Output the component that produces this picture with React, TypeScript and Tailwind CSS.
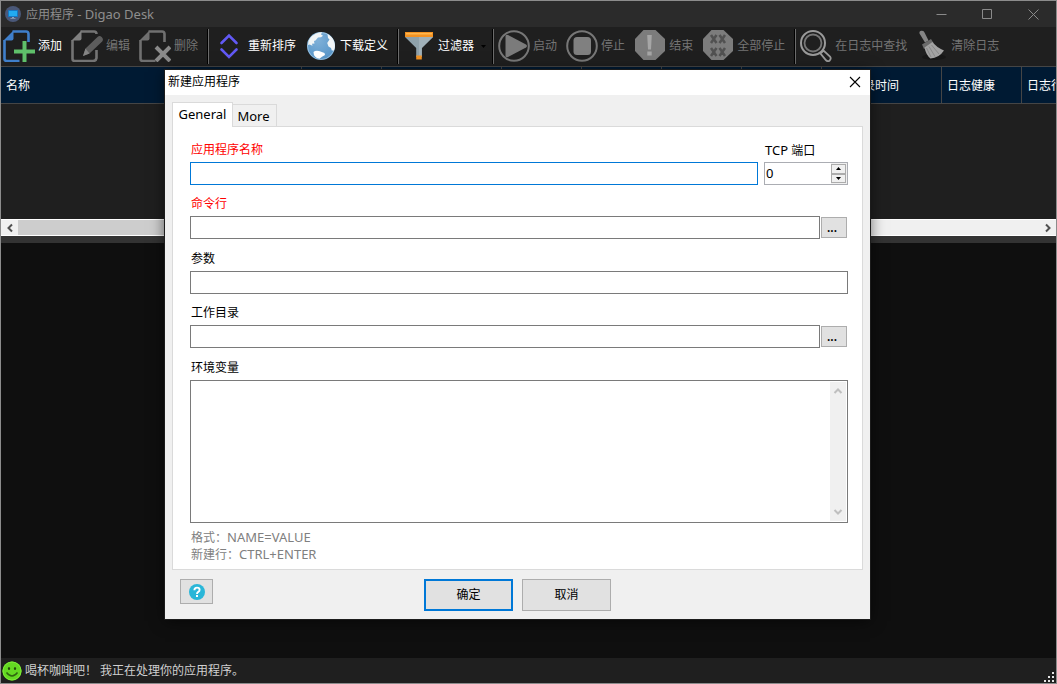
import React from "react";

type IconProps = { className?: string };

function AppLogo({ className = "size-4" }: IconProps) {
  return (
    <svg viewBox="0 0 16 16" className={className} aria-hidden="true">
      <circle cx="8" cy="8" r="8" fill="#4a5878" />
      <rect x="3" y="4" width="10" height="7" rx="0.6" fill="#1577c4" />
      <rect x="4" y="5" width="8" height="5" fill="#22aaf0" />
      <path d="M7 11h2v1h1.500v0.700h-5V12H7z" fill="#8fa3bd" />
    </svg>
  );
}

function PageShape({ color, fold }: { color: string; fold: string }) {
  return (
    <>
      <path d="M9.500 1.500H23q2.500 0 2.500 2.500v8M1.500 10v19q0 2 2.500 2h12.500" fill="none" stroke={color} strokeWidth="2.600" />
      <path d="M0.500 10.500 10.500 0.600V8.500q0 2-2 2z" fill={fold} />
    </>
  );
}

function AddIcon() {
  return (
    <svg viewBox="0 0 32 32" className="size-8" aria-hidden="true">
      <PageShape color="#3f7fcb" fold="#3f7fcb" />
      <path d="M21.500 11v21M11 21.500h21" stroke="#5fc06a" strokeWidth="4" />
    </svg>
  );
}

function EditIcon() {
  return (
    <svg viewBox="0 0 32 32" className="size-8" aria-hidden="true">
      <path d="M9.500 1.500H23q2.500 0 2.500 2.500M1.500 10v19q0 2 2.500 2h18q3 0 3.500-3v-8" fill="none" stroke="#747474" strokeWidth="2.600" />
      <path d="M0.500 10.500 10.500 0.600V8.500q0 2-2 2z" fill="#808080" />
      <path d="m12 26 2.500-7.500L26.500 7q2-2 4.200 0t0.500 4.500L18.500 23.500z" fill="#5d5d5d" />
      <path d="m12 26 2.500-7.500 4 5z" fill="#858585" />
    </svg>
  );
}

function DeleteIcon() {
  return (
    <svg viewBox="0 0 32 32" className="size-8" aria-hidden="true">
      <PageShape color="#707070" fold="#707070" />
      <path d="m17 17 14 14M31 17 17 31" stroke="#8a8a8a" strokeWidth="4" />
    </svg>
  );
}

function SortIcon() {
  return (
    <svg viewBox="0 0 32 32" className="size-8" aria-hidden="true">
      <path d="m8.500 13 7.500-7.500 7.500 7.500M8.500 19.500l7.500 7.500 7.500-7.500" fill="none" stroke="#6259f5" strokeWidth="2.600" strokeLinecap="round" />
    </svg>
  );
}

function GlobeIcon() {
  return (
    <svg viewBox="0 0 32 32" className="size-8" aria-hidden="true">
      <defs>
        <radialGradient id="ocean" cx="0.4" cy="0.3" r="0.75">
          <stop offset="0" stopColor="#7fb0d8" />
          <stop offset="1" stopColor="#5594c8" />
        </radialGradient>
      </defs>
      <circle cx="16" cy="16" r="14" fill="url(#ocean)" />
      <path d="M7 6q5-4 10-3.800l-1 2.200 2 1.300-2 1.500-3 0.300-2.500 3-1.500 0.500 0.500 2.500-2.500 0.200 0.500 2-3-1.200-1.500 0.500Q3 9.500 7 6z" fill="#f2f5f6" />
      <path d="M8.500 22q2-2 5.500-1l5.500 2 0.500 2-3 1.800-2.500 2q-6-1-6-6.800z" fill="#fff" />
      <path d="M22.500 4q5 2.500 6.700 7.500t-0.200 9l-2.200 0-0.800-2.500-2.500-1.500-1.300-3.500 2.300-3.500-1.500-1.500z" fill="#f2f5f6" />
      <circle cx="16" cy="16" r="13.500" fill="none" stroke="#e0edf5" strokeWidth="0.700" opacity="0.6" />
    </svg>
  );
}

function FunnelIcon() {
  return (
    <svg viewBox="0 0 32 32" className="size-8" aria-hidden="true">
      <path d="M2 7h28L18.800 18v9h-5.600v-9z" fill="#8fa1aa" />
      <path d="M16 7h14L18.800 18v9H16z" fill="#a0b0b8" />
      <path d="M2 2h28v5H2z" fill="#f39222" />
      <path d="M3 3h26v1.500H3z" fill="#ffb64d" />
      <path d="M13.200 25.500h5.600v4h-5.600z" fill="#f39222" />
    </svg>
  );
}

function PlayIcon() {
  return (
    <svg viewBox="0 0 32 32" className="size-8" aria-hidden="true">
      <circle cx="16" cy="16" r="14.800" fill="none" stroke="#777" strokeWidth="2" />
      <path d="M7.500 6.500q0-2.500 2.500-1.500l18 9.500q2 1.500 0 3L10 27q-2.500 1-2.500-1.500z" fill="#7b7b7b" />
    </svg>
  );
}

function StopIcon() {
  return (
    <svg viewBox="0 0 32 32" className="size-8" aria-hidden="true">
      <circle cx="16" cy="16" r="14.800" fill="none" stroke="#777" strokeWidth="2" />
      <rect x="7.500" y="7" width="17.500" height="18" rx="3.500" fill="#808080" />
    </svg>
  );
}

function KillIcon() {
  return (
    <svg viewBox="0 0 32 32" className="size-8" aria-hidden="true">
      <path d="M9.500 0h12L31 9v12l-9.500 9h-12L1 21V9z" fill="#7c7c7c" />
      <path d="M13.200 5h4.600l-0.800 14.500h-3zM13.300 21.500h4.400v4h-4.400z" fill="#a6a6a6" />
    </svg>
  );
}

function KillAllIcon() {
  return (
    <svg viewBox="0 0 32 32" className="size-8" aria-hidden="true">
      <path d="M9.500 0h12L31 9v12l-9.500 9h-12L1 21V9z" fill="#7c7c7c" />
      <path d="m9 5 5.500 8m0-8L9 13M17.500 5l5.500 8m0-8-5.500 8M9 18l5.500 8m0-8L9 26M17.500 18l5.500 8m0-8-5.500 8" stroke="#515151" strokeWidth="2.500" />
    </svg>
  );
}

function SearchIcon() {
  return (
    <svg viewBox="0 0 32 32" className="size-8" aria-hidden="true">
      <path d="m20.500 23.500 3-3 6.500 6q1.500 2-0.200 3.800t-3.800 0z" fill="#1f1f1f" stroke="#9a9a9a" strokeWidth="1.800" />
      <circle cx="13" cy="13" r="12" fill="#1f1f1f" stroke="#9a9a9a" strokeWidth="2" />
      <circle cx="13" cy="13" r="8.500" fill="none" stroke="#777" strokeWidth="1.800" />
    </svg>
  );
}

function BroomIcon() {
  return (
    <svg viewBox="0 0 32 32" className="size-8" aria-hidden="true">
      <ellipse cx="18" cy="27" rx="12" ry="3" fill="#171717" />
      <path d="M3.500 3.500q-0.500-2.500 2-2.800t3 1.800l4 8-3.500 2z" fill="#858585" />
      <path d="m6 14.500 9-5.500 2.500 4-9.500 6z" fill="#6b6b6b" />
      <path d="m8.500 17.500 8-5.500q3.500 5 11.500 8.500-5 7.500-13.500 8-4.500-3.500-6-11z" fill="#a2a2a2" />
      <path d="m10.500 18 4.500 9m-2-10.500 6 10m-3.500-11.500 7.500 9" stroke="#808080" strokeWidth="0.800" />
    </svg>
  );
}

function ToolButton({ icon, label, disabled = false }: { icon: React.ReactNode; label: string; disabled?: boolean }) {
  return (
    <button
      type="button"
      disabled={disabled}
      className="flex shrink-0 items-center gap-[3px] pr-[7px] pl-0.5 text-white disabled:text-[#747474]"
    >
      {icon}
      <span className="whitespace-nowrap">{label}</span>
    </button>
  );
}

function ToolSeparator() {
  return (
    <div className="flex h-[35px] w-1.5 shrink-0 justify-center">
      <div className="w-0.5 border-r border-[#6c6c6c] bg-black" />
    </div>
  );
}

function Chevron({ d, className }: { d: string; className: string }) {
  return (
    <svg viewBox="0 0 10 10" className={className} fill="none" stroke="currentColor" strokeWidth="2" aria-hidden="true">
      <path d={d} />
    </svg>
  );
}

function Latin({ children }: { children: React.ReactNode }) {
  return <span className="text-[13px]">{children}</span>;
}

const columns = [
  { label: "名称", width: "w-[301px]" },
  { label: "", width: "w-20" },
  { label: "", width: "w-[120px]" },
  { label: "", width: "w-20" },
  { label: "", width: "w-20" },
  { label: "", width: "w-20" },
  { label: "", width: "w-20" },
  { label: "最后记录时间", width: "w-[120px]" },
  { label: "日志健康", width: "w-20" },
  { label: "日志行数", width: "w-20" },
];

const fieldClass = "h-[23px] w-full min-w-0 border border-[#7a7a7a] bg-white px-0.5 outline-none";

function Field({
  id,
  label,
  required = false,
  children,
  className = "",
}: {
  id: string;
  label: React.ReactNode;
  required?: boolean;
  children: React.ReactNode;
  className?: string;
}) {
  return (
    <div className={`flex flex-col gap-[3px] ${className}`}>
      <label htmlFor={id} className={required ? "h-[18px] pl-px leading-[18px] text-[#ff0000]" : "h-[18px] pl-px leading-[18px]"}>
        {label}
      </label>
      {children}
    </div>
  );
}

function PathField({ id, label, required }: { id: string; label: string; required?: boolean }) {
  return (
    <Field id={id} label={label} required={required}>
      <div className="flex items-center gap-px pr-px">
        <input id={id} className={fieldClass} />
        <button
          type="button"
          aria-label={`浏览${label}`}
          className="h-[21px] w-[26px] shrink-0 border border-[#adadad] bg-[#e1e1e1] pr-1 leading-5 font-semibold text-black"
        >
          ...
        </button>
      </div>
    </Field>
  );
}

function NewAppDialog() {
  return (
    <section
      role="dialog"
      aria-labelledby="dialog-title"
      className="absolute top-[69px] right-[186px] left-[164px] bg-[#f0f0f0] text-black shadow-[0_2px_14px_rgba(0,0,0,0.6)] outline outline-[#1c1c1c]"
    >
      <header className="flex h-[25px] items-center justify-between bg-white pr-2 pb-px pl-[3px]">
        <h2 id="dialog-title">新建应用程序</h2>
        <button type="button" aria-label="关闭" className="p-px">
          <svg viewBox="0 0 12 12" className="size-3" stroke="#000" strokeWidth="1.1" aria-hidden="true">
            <path d="m1 1 10 10M11 1 1 11" />
          </svg>
        </button>
      </header>

      <div className="px-[7px] pt-[7px]">
        <div role="tablist" className="flex items-end text-[13px]">
          <button
            type="button"
            role="tab"
            aria-selected="true"
            className="relative z-10 -mb-px h-[25px] w-[61px] border border-b-0 border-[#dadada] bg-white pb-0.5"
          >
            General
          </button>
          <button
            type="button"
            role="tab"
            aria-selected="false"
            className="h-[22px] w-11 border border-b-0 border-l-0 border-[#dadada] bg-[#f0f0f0] pr-0.5"
          >
            More
          </button>
        </div>

        <div role="tabpanel" className="flex flex-col gap-[11px] border border-[#dadada] bg-white pt-3.5 pr-3.5 pb-1.5 pl-[17px]">
          <div className="flex flex-col gap-2.5">
            <div className="flex gap-1.5">
              <Field id="app-name" label="应用程序名称" required className="min-w-0 flex-1">
                <input id="app-name" className="h-[23px] w-full border border-[#0078d7] bg-white px-0.5 outline-none" />
              </Field>
              <Field id="tcp-port" label={<><Latin>TCP</Latin> 端口</>} className="w-21">
                <div className="flex h-[23px] border border-[#abadb3] bg-white">
                  <input id="tcp-port" inputMode="numeric" defaultValue="0" className="h-5 min-w-0 flex-1 px-px text-[13px] outline-none" />
                  <div className="flex w-4 shrink-0 flex-col bg-[#f0f0f0] py-px pr-px">
                    <button type="button" aria-label="增加" className="flex flex-1 items-center justify-center border border-[#acacac]">
                      <svg viewBox="0 0 5 3" className="h-[3px] w-[5px]" aria-hidden="true">
                        <path d="M0 3 2.500 0 5 3z" />
                      </svg>
                    </button>
                    <button type="button" aria-label="减少" className="flex flex-1 items-center justify-center border border-[#acacac]">
                      <svg viewBox="0 0 5 3" className="h-[3px] w-[5px]" aria-hidden="true">
                        <path d="M0 0h5L2.500 3z" />
                      </svg>
                    </button>
                  </div>
                </div>
              </Field>
            </div>
            <PathField id="command" label="命令行" required />
          </div>

          <div className="flex flex-col gap-2.5">
            <Field id="arguments" label="参数">
              <input id="arguments" className={fieldClass} />
            </Field>
            <PathField id="workdir" label="工作目录" />
          </div>

          <div>
            <Field id="environment" label="环境变量">
              <div className="flex h-[143px] border border-[#7a7a7a] bg-white">
                <textarea id="environment" className="min-w-0 flex-1 resize-none p-0.5 outline-none" />
                <div className="m-px flex w-4 shrink-0 flex-col items-center justify-between bg-[#f0f0f0] py-1 text-[#bfbfbf]">
                  <Chevron d="m1.500 7 3.500-3.500L8.500 7" className="size-2.5" />
                  <Chevron d="m1.500 3 3.500 3.500L8.500 3" className="size-2.5" />
                </div>
              </div>
            </Field>
            <div className="pt-1.5 pl-px leading-[17px] text-[#808080]">
              <p className="h-[17px]">格式：<Latin>NAME=VALUE</Latin></p>
              <p className="h-[17px]">新建行：<Latin>CTRL+ENTER</Latin></p>
            </div>
          </div>
        </div>
      </div>

      <footer className="grid grid-cols-[1fr_auto_1fr] items-start px-[15px] pt-[9px] pb-2">
        <button
          type="button"
          aria-label="帮助"
          className="flex h-[25px] w-[33px] items-center justify-center border border-[#adadad] bg-[#e1e1e1]"
        >
          <svg viewBox="0 0 16 16" className="size-4" aria-hidden="true">
            <circle cx="8" cy="8" r="8" fill="#29b6d8" />
            <path d="M5.400 6.200q0-2.600 2.600-2.600t2.600 2.200q0 1.300-1.300 2.100T8 10" fill="none" stroke="#fff" strokeWidth="1.900" />
            <path d="M7 11h2v2H7z" fill="#fff" />
          </svg>
        </button>
        <div className="flex gap-[9px]">
          <button type="button" className="h-8 w-[89px] border-2 border-[#0078d7] bg-[#e1e1e1]">
            确定
          </button>
          <button type="button" className="h-8 w-[89px] border border-[#adadad] bg-[#e1e1e1]">
            取消
          </button>
        </div>
      </footer>
    </section>
  );
}

export default function App() {
  return (
    <div className="relative flex min-h-screen flex-col overflow-hidden border border-[#8c8c8c] bg-[#0f0f0f] font-['Noto_Sans','Noto_Sans_CJK_SC',sans-serif] text-[12px] leading-4 text-white">
      <header className="flex h-[26px] shrink-0 items-center gap-[5px] bg-[#2b2b2b] pl-1 text-[#8e8e8e]">
        <AppLogo />
        <h1 className="flex-1">应用程序 <Latin>- Digao Desk</Latin></h1>
        <div className="flex pr-[17px] text-[#8a8a8a]">
          {[
            { name: "最小化", d: "M0.500 5.500h10" },
            { name: "最大化", d: "M0.500 0.500h9v9h-9z" },
            { name: "关闭", d: "m0.500 0.500 10 10m0-10-10 10" },
          ].map((control) => (
            <button key={control.name} type="button" aria-label={control.name} className="ml-[35px]">
              <svg viewBox="0 0 11 11" className="size-[11px]" fill="none" stroke="currentColor" aria-hidden="true">
                <path d={control.d} />
              </svg>
            </button>
          ))}
        </div>
      </header>

      <nav aria-label="工具栏" className="flex h-[39px] shrink-0 items-center bg-[#1f1f1f] pb-px">
        <ToolButton icon={<AddIcon />} label="添加" />
        <ToolButton icon={<EditIcon />} label="编辑" disabled />
        <ToolButton icon={<DeleteIcon />} label="删除" disabled />
        <ToolSeparator />
        <ToolButton icon={<SortIcon />} label="重新排序" />
        <ToolButton icon={<GlobeIcon />} label="下载定义" />
        <ToolSeparator />
        <ToolButton icon={<FunnelIcon />} label="过滤器" />
        <button type="button" aria-label="过滤器选项" className="w-[9px] shrink-0">
          <svg viewBox="0 0 5 3" className="h-[3px] w-[5px]" aria-hidden="true">
            <path d="M0 0h5L2.500 3z" />
          </svg>
        </button>
        <ToolSeparator />
        <ToolButton icon={<PlayIcon />} label="启动" disabled />
        <ToolButton icon={<StopIcon />} label="停止" disabled />
        <ToolButton icon={<KillIcon />} label="结束" disabled />
        <ToolButton icon={<KillAllIcon />} label="全部停止" disabled />
        <ToolSeparator />
        <ToolButton icon={<SearchIcon />} label="在日志中查找" disabled />
        <ToolButton icon={<BroomIcon />} label="清除日志" disabled />
      </nav>

      <main className="flex flex-1 flex-col">
        <div className="h-[153px] shrink-0 overflow-hidden bg-[#1f1f1f]">
          <table className="w-[1101px] table-fixed border-separate border-spacing-0">
            <thead>
              <tr className="bg-[#001a33]">
                {columns.map((column, index) => (
                  <th
                    key={index}
                    scope="col"
                    className={`${column.width} h-[38px] border-y border-r border-[#454545] p-0 pt-0.5 pl-[5px] text-left font-normal whitespace-nowrap`}
                  >
                    {column.label}
                  </th>
                ))}
              </tr>
            </thead>
          </table>
        </div>
        <div className="flex h-[17px] shrink-0 items-center justify-between border-y border-white bg-[#f0f0f0] text-[#505050]">
          <button type="button" aria-label="向左滚动" className="flex w-[17px] justify-center">
            <Chevron d="M7 1.500 3.500 5 7 8.500" className="size-2.5" />
          </button>
          <div className="h-full w-3/4 bg-[#cdcdcd]" />
          <div className="flex-1" />
          <button type="button" aria-label="向右滚动" className="flex w-[17px] justify-center">
            <Chevron d="M3 1.500 6.500 5 3 8.500" className="size-2.5" />
          </button>
        </div>
        <div className="h-[7px] shrink-0 bg-[#333333]" />
        <div className="flex-1" />
      </main>

      <footer className="flex h-[25px] shrink-0 items-center gap-[3px] bg-[#1f1f1f] pl-px text-[#d0d0d0]">
        <svg viewBox="0 0 20 20" className="size-5" aria-hidden="true">
          <circle cx="10" cy="10" r="9.600" fill="#64d822" />
          <circle cx="10" cy="10" r="9" fill="none" stroke="#7dec37" strokeWidth="1" />
          <ellipse cx="7" cy="7.500" rx="1.100" ry="1.600" fill="#244c0c" />
          <ellipse cx="13" cy="7.500" rx="1.100" ry="1.600" fill="#244c0c" />
          <path d="M4.500 11.500q5.500 7 11 0" fill="none" stroke="#2f6410" strokeWidth="1.400" />
        </svg>
        <p className="flex-1">喝杯咖啡吧！ 我正在处理你的应用程序。</p>
        <svg viewBox="0 0 12 12" className="mr-px size-3 self-end" fill="#e4e4e4" aria-hidden="true">
          <path d="M9 1h2v2H9zM5 5h2v2H5zM9 5h2v2H9zM1 9h2v2H1zM5 9h2v2H5zM9 9h2v2H9z" />
        </svg>
      </footer>

      <NewAppDialog />
    </div>
  );
}
